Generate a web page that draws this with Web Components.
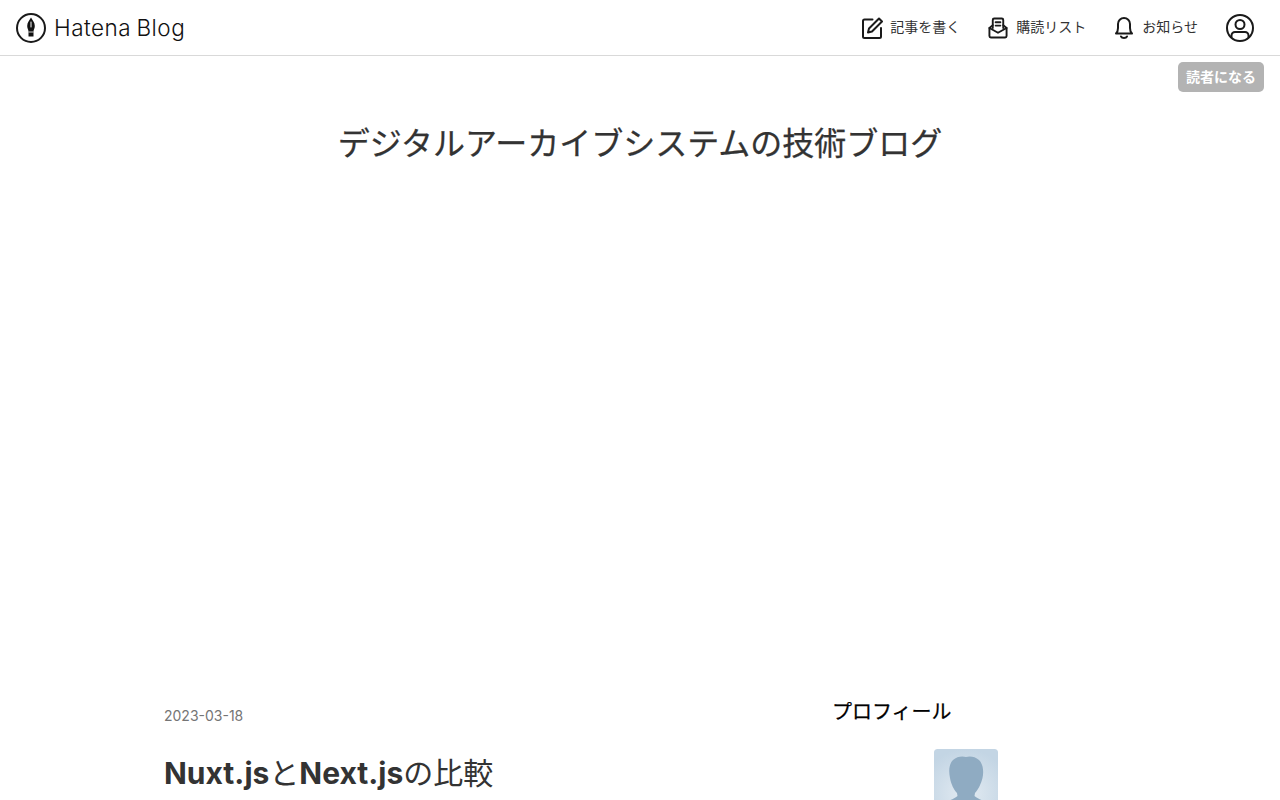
<!DOCTYPE html>
<html lang="ja">
<head>
<meta charset="UTF-8" />
<title>デジタルアーカイブシステムの技術ブログ</title>
<style>
    html, body { margin: 0; height: 800px; overflow: hidden; background: #fff; }
    body { font-family: Inter, "Noto Sans CJK JP", sans-serif; color: #333; }
</style>
</head>
<body>
<hatena-globalheader></hatena-globalheader>
<blog-title>デジタルアーカイブシステムの技術ブログ</blog-title>
<blog-main>
    <blog-entry date="2023-03-18">
        <b>Nuxt.js</b>と<b>Next.js</b>の比較
    </blog-entry>
    <blog-sidebar heading="プロフィール"></blog-sidebar>
</blog-main>

<script>
    class HatenaGlobalheader extends HTMLElement {
        constructor() {
            super()
            const shadow = this.attachShadow({ mode: 'open' })
            shadow.innerHTML = `
            <style>
                :host {
                    display: flex;
                    align-items: center;
                    justify-content: space-between;
                    height: 55px;
                    padding: 0 26px 0 16px;
                    border-bottom: 1px solid #d9d9d9;
                    color: #1a1a1a;
                }
                .logo { display: flex; align-items: center; gap: 8px; }
                .logo span {
                    font: 300 22.5px Inter, sans-serif;
                    color: #111;
                    letter-spacing: 0.5px;
                    word-spacing: -1.5px;
                }
                nav { display: flex; align-items: center; }
                .item {
                    display: flex;
                    align-items: center;
                    gap: 8px;
                    margin-right: 28px;
                    font-size: 14px;
                    color: #333;
                }
                .item span { padding-bottom: 4px; }
                .item:first-child { gap: 7px; }
                .item:last-child { margin-right: 0; }
                svg { display: block; fill: none; stroke: #1a1a1a; stroke-width: 2; stroke-linejoin: round; stroke-linecap: round; }
            </style>
            <div class="logo">
                <svg width="30" height="30" viewBox="0 0 30 30">
                    <circle cx="15" cy="15" r="14" />
                    <path d="M15 4.500 C16.500 7 18.800 9.500 18.800 13 C18.800 15.500 17.500 16.800 17.500 18.500 V23.500 H12.500 V18.500 C12.500 16.800 11.200 15.500 11.200 13 C11.200 9.500 13.500 7 15 4.500 Z" fill="#111" stroke="none" />
                    <path d="M15 9 V14" stroke="#fff" stroke-width="1" />
                    <path d="M12.500 19 H17.500" stroke="#fff" stroke-width="0.8" stroke-linecap="butt" />
                </svg>
                <span>Hatena Blog</span>
            </div>
            <nav>
                <div class="item">
                    <svg width="21" height="22" viewBox="0 0 21 22">
                        <path d="M10.500 2.500 H2.500 A1.500 1.500 0 0 0 1 4 V19.500 A1.500 1.500 0 0 0 2.500 21 H17.500 A1.500 1.500 0 0 0 19 19.500 V11" />
                        <path d="M17 1.500 L20 4.500 L10 14.500 L6 15.500 L7 11.500 Z" />
                    </svg>
                    <span>記事を書く</span>
                </div>
                <div class="item">
                    <svg width="20" height="22" viewBox="0 0 21 22">
                        <path d="M5 11 V2.500 A1.500 1.500 0 0 1 6.500 1 H14.500 A1.500 1.500 0 0 1 16 2.500 V11" />
                        <path d="M8 5 H13 M8 8.500 H13" />
                        <path d="M5 8 L1.500 11 V19.500 A1.500 1.500 0 0 0 3 21 H18 A1.500 1.500 0 0 0 19.500 19.500 V11 L16 8" />
                        <path d="M1.500 11 L10.500 16 L19.500 11" />
                    </svg>
                    <span>購読リスト</span>
                </div>
                <div class="item">
                    <svg width="20" height="24" viewBox="0 0 20 24">
                        <path d="M2 17.500 C3.500 16 4 15 4 12 V8 A6 6 0 0 1 16 8 V12 C16 15 16.500 16 18 17.500 Z" />
                        <path d="M7 20.500 C8 22.500 12 22.500 13 20.500" />
                    </svg>
                    <span>お知らせ</span>
                </div>
                <div class="item">
                    <svg width="28" height="28" viewBox="0 0 28 28">
                        <circle cx="14" cy="14" r="13" />
                        <circle cx="14" cy="10.500" r="4.500" />
                        <path d="M5.500 23 V21.500 A3.500 3.500 0 0 1 9 18 H19 A3.500 3.500 0 0 1 22.500 21.500 V23" />
                    </svg>
                </div>
            </nav>
            `
        }
    }

    class BlogTitle extends HTMLElement {
        constructor() {
            super()
            const shadow = this.attachShadow({ mode: 'open' })
            shadow.innerHTML = `
            <style>
                :host {
                    display: block;
                    position: relative;
                    height: 632px;
                    text-align: center;
                }
                h1 {
                    margin: 0;
                    padding-top: 65px;
                    font-size: 32px;
                    line-height: 46px;
                    font-weight: 400;
                    color: #333;
                    -webkit-text-stroke: 0.25px #333;
                }
                .subscribe {
                    position: absolute;
                    top: 6px;
                    right: 16px;
                    width: 86px;
                    height: 30px;
                    line-height: 30px;
                    border-radius: 5px;
                    background: #b3b3b3;
                    color: #fff;
                    font-size: 14px;
                    font-weight: 700;
                }
            </style>
            <div class="subscribe">読者になる</div>
            <h1><slot></slot></h1>
            `
        }
    }

    class BlogMain extends HTMLElement {
        constructor() {
            super()
            const shadow = this.attachShadow({ mode: 'open' })
            shadow.innerHTML = `
            <style>
                :host {
                    display: flex;
                    padding-left: 164px;
                }
            </style>
            <slot></slot>
            `
        }
    }

    class BlogEntry extends HTMLElement {
        constructor() {
            super()
            const shadow = this.attachShadow({ mode: 'open' })
            shadow.innerHTML = `
            <style>
                :host { display: block; width: 668px; }
                time {
                    display: block;
                    margin-top: 18px;
                    font-size: 14px;
                    line-height: 20px;
                    color: #757575;
                }
                h2 {
                    margin: 25px 0 0;
                    font-size: 30px;
                    line-height: 44px;
                    font-weight: 400;
                    color: #333;
                }
                ::slotted(b) { font-weight: 700; }
            </style>
            <time>${this.getAttribute('date')}</time>
            <h2><slot></slot></h2>
            `
        }
    }

    class BlogSidebar extends HTMLElement {
        constructor() {
            super()
            const shadow = this.attachShadow({ mode: 'open' })
            shadow.innerHTML = `
            <style>
                :host { display: block; width: 166px; }
                h3 {
                    margin: 11px 0 0;
                    font-size: 20px;
                    line-height: 26px;
                    font-weight: 400;
                    color: #000;
                    -webkit-text-stroke: 0.25px #000;
                }
                .avatar {
                    display: block;
                    margin: 24px 0 0 auto;
                    width: 64px;
                    height: 64px;
                    border-radius: 3px;
                }
            </style>
            <h3>${this.getAttribute('heading')}</h3>
            <svg class="avatar" viewBox="0 0 64 64">
                <defs>
                    <radialGradient id="bg" cx="50%" cy="70%" r="70%">
                        <stop offset="0" stop-color="#e3ebf2" />
                        <stop offset="1" stop-color="#c3d5e4" />
                    </radialGradient>
                </defs>
                <rect width="64" height="64" rx="3" fill="url(#bg)" />
                <path d="M32 8 C35 7 41 7 45 11 C49 15 50 22 48.500 29 C47 35 44 41 41 44 L40.500 47 C44 50 48 51 52 53 V64 H12 V53 C16 51 20 50 23.500 47 L23 44 C20 41 17 35 16 29 C14.500 22 15 15 19 11 C23 7 29 7 32 8 Z" fill="#8fabc2" />
            </svg>
            `
        }
    }

    customElements.define('hatena-globalheader', HatenaGlobalheader)
    customElements.define('blog-title', BlogTitle)
    customElements.define('blog-main', BlogMain)
    customElements.define('blog-entry', BlogEntry)
    customElements.define('blog-sidebar', BlogSidebar)
</script>
</body>
</html>
